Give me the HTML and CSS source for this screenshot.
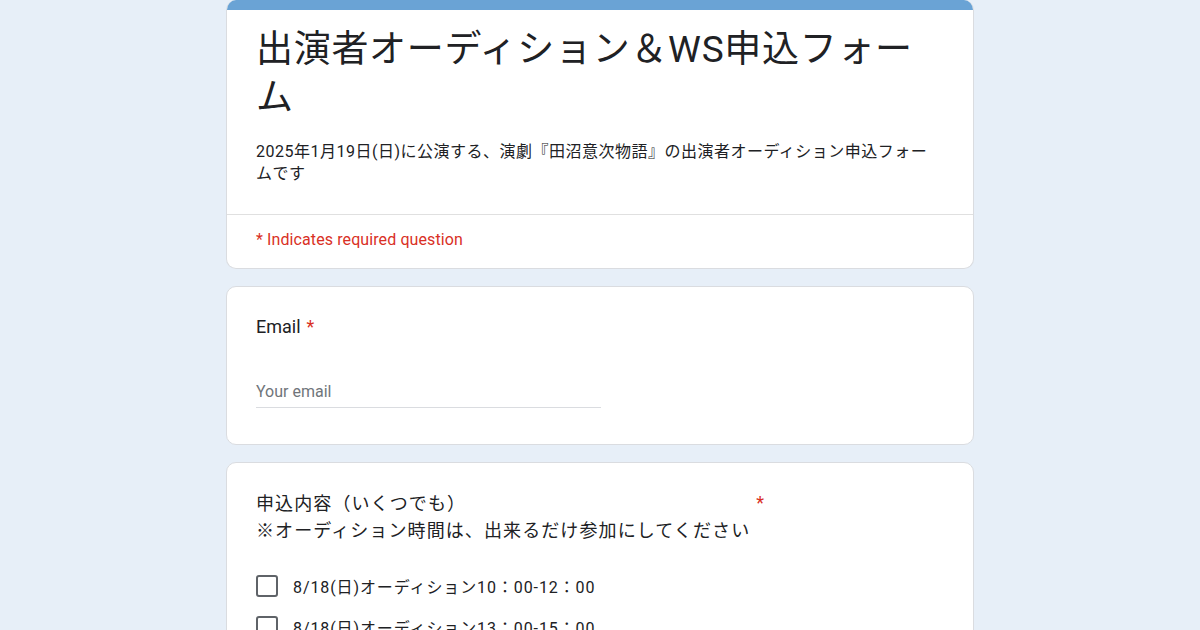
FILE: index.html
```html
<!DOCTYPE html>
<html lang="ja">
<head>
<meta charset="utf-8">
<title>出演者オーディション＆WS申込フォーム</title>
<link rel="stylesheet" href="styles.css">
</head>
<body>
<main class="form">
  <section class="card header-card">
    <div class="top-bar"></div>
    <div class="header-body">
      <h1 class="form-title">出演者オーディション＆WS申込フォーム</h1>
      <p class="form-desc">2025年1月19日(日)に公演する、演劇『田沼意次物語』の出演者オーディション申込フォームです</p>
    </div>
    <div class="required-note">* Indicates required question</div>
  </section>

  <section class="card question">
    <div class="q-head">
      <div class="q-title">Email</div><span class="star">*</span>
    </div>
    <div class="text-input">Your email</div>
  </section>

  <section class="card question">
    <div class="q-head">
      <div class="q-title jp">申込内容（いくつでも）<br>※オーディション時間は、出来るだけ参加にしてください</div><span class="star">*</span>
    </div>
    <ul class="options">
      <li class="option"><span class="box"></span><span class="opt-label">8/18(日)オーディション10：00-12：00</span></li>
      <li class="option"><span class="box"></span><span class="opt-label">8/18(日)オーディション13：00-15：00</span></li>
      <li class="option"><span class="box"></span><span class="opt-label">8/18(日)ワークショップ16：00-18：00</span></li>
    </ul>
  </section>
</main>
</body>
</html>
```

FILE: styles.css
```css
* { box-sizing: border-box; }
html, body { margin: 0; padding: 0; }
body {
  background: #e7eff8;
  font-family: Roboto, "Noto Sans CJK JP", "Noto Sans", sans-serif;
  color: #202124;
  overflow: hidden;
  height: 630px;
}
.form {
  width: 748px;
  margin: 0 auto;
  display: flex;
  flex-direction: column;
  gap: 17px;
}
.card {
  background: #fff;
  border: 1px solid #dadce0;
  border-radius: 10px;
  overflow: hidden;
}
.header-card { border-top: none; }
.top-bar {
  height: 10px;
  background: #6aa3d5;
}
.header-body {
  padding: 16px 34px 29px 29px;
  border-bottom: 1px solid #e0e0e0;
}
.form-title {
  margin: 0;
  font-size: 37px;
  font-weight: 400;
  line-height: 48px;
  letter-spacing: 0.7px;
}
.form-desc {
  margin: 19px 0 0;
  font-size: 16px;
  line-height: 22px;
  letter-spacing: 0.5px;
}
.required-note {
  padding: 15px 29px 19px;
  color: #d93025;
  font-size: 16px;
  line-height: 19px;
  letter-spacing: 0.1px;
}
.question {
  padding: 27px 29px 36px;
}
.q-head {
  display: flex;
  align-items: flex-start;
}
.q-title {
  font-size: 18px;
  line-height: 26px;
  letter-spacing: 0;
}
.q-title.jp {
  line-height: 27px;
  letter-spacing: 1.1px;
}
.star {
  color: #d93025;
  font-size: 18px;
  line-height: 26px;
  margin-left: 6px;
}
.text-input {
  margin-top: 39px;
  width: 345px;
  padding: 3px 0 5px;
  border-bottom: 1px solid #dadce0;
  color: #70757a;
  font-size: 16px;
  line-height: 20px;
}
.options {
  list-style: none;
  margin: 31px 0 0;
  padding: 0;
  display: flex;
  flex-direction: column;
  gap: 19px;
}
.option {
  display: flex;
  align-items: center;
  height: 22px;
}
.box {
  width: 22px;
  height: 22px;
  border: 2px solid #5f6368;
  border-radius: 3px;
  flex: none;
}
.opt-label {
  margin-left: 15px;
  font-size: 16px;
  letter-spacing: 0.9px;
}
```
